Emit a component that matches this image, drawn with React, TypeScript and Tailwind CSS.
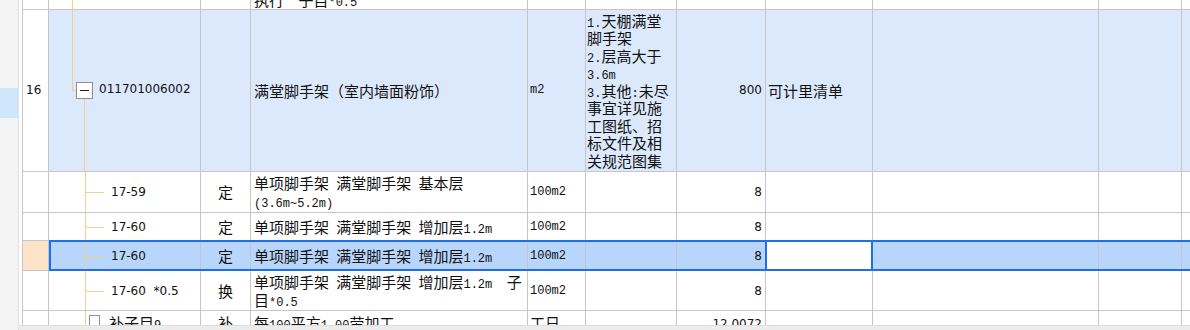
import React from "react";

const GRID =
  "grid grid-cols-[26px_152px_50px_277px_58px_91px_89px_107px_226px_83px_1fr] border-b border-[#c6c6c6]";
const C = "border-r border-[#c6c6c6] relative overflow-hidden";
const CJK =
  "font-['Noto_Sans_CJK_SC',sans-serif] text-[15px] leading-[17.5px] text-[#111] whitespace-pre";
const NUM = "font-['DejaVu_Sans',sans-serif] text-[12px] text-[#111] whitespace-pre";
const LINE = "absolute bg-[#f1cf90]";

function T({ s }: { s: string }) {
  const parts = s.split(/([\x00-\x7f]+)/).filter(Boolean);
  return (
    <>
      {parts.map((p, i) =>
        /^[\x00-\x7f]+$/.test(p) ? (
          <span key={i} className="font-['Liberation_Mono',monospace] text-[12px] leading-[0]">
            {p}
          </span>
        ) : (
          <span key={i}>{p}</span>
        )
      )}
    </>
  );
}

function ChildTree({ code }: { code: string }) {
  return (
    <>
      <div className={`${LINE} left-[36px] top-0 bottom-0 w-px`} />
      <div className={`${LINE} left-[36px] top-1/2 w-[19px] h-px`} />
      <div className={`${NUM} h-full flex items-center pl-[62px]`}>{code}</div>
    </>
  );
}

type ChildProps = {
  h: string;
  code: string;
  type: string;
  name: React.ReactNode;
  unit: string;
  qty: string;
  selected?: boolean;
};

function ChildRow({ h, code, type, name, unit, qty, selected }: ChildProps) {
  const bg = selected ? "bg-[#b8d6fb]" : "bg-white";
  return (
    <div className={`${GRID} ${h} relative`}>
      <div className={`${C} ${selected ? "bg-[#fde4c8]" : "bg-white"}`} />
      <div className={`${C} ${bg}`}>
        <ChildTree code={code} />
      </div>
      <div className={`${C} ${bg} ${CJK} flex items-center justify-center`}>{type}</div>
      <div className={`${C} ${bg} ${CJK} flex items-center pl-[3px]`}>
        <div>{name}</div>
      </div>
      <div className={`${C} ${bg} ${CJK} flex items-center pl-[2px]`}>
        <T s={unit} />
      </div>
      <div className={`${C} ${bg}`} />
      <div className={`${C} ${bg} ${NUM} flex items-center justify-end pr-[3px]`}>{qty}</div>
      <div className={`${C} ${selected ? "bg-white" : bg} overflow-visible`}>
        {selected && (
          <div className="absolute left-[-1px] right-[-1px] top-[-1px] bottom-[-1px] border-2 border-[#1e6ef0] pointer-events-none z-10" />
        )}
      </div>
      <div className={`${C} ${bg}`} />
      <div className={`${C} ${bg}`} />
      <div className={`${bg}`} />
      {selected && (
        <div className="absolute left-[26px] right-[-6px] top-[-1px] h-[31px] border-2 border-[#1e6ef0] pointer-events-none z-10" />
      )}
    </div>
  );
}

export default function App() {
  const blue = "bg-[#dce9fc]";
  return (
    <div className="w-[1190px] h-[330px] overflow-hidden bg-white flex">
      {/* left strip */}
      <div className="w-[19px] h-full bg-[#f3f3f3] border-r border-[#e2e2e2] flex flex-col shrink-0">
        <div className="h-[88px]" />
        <div className="h-[30px] bg-[#cfe5fa]" />
      </div>

      <div className="flex-1 flex flex-col min-w-0">
        <div className="h-[325px] pl-[3px] overflow-hidden">
          <div className="border-l border-[#c6c6c6] h-full flex flex-col">
            {/* top partial row */}
            <div className={`${GRID} h-[10px]`}>
              <div className={`${C}`} />
              <div className={`${C}`}>
                <div className={`${LINE} left-[23px] top-0 bottom-0 w-px`} />
              </div>
              <div className={`${C}`} />
              <div className={`${C} ${CJK} flex items-end pl-[3px]`}>
                <div className="mb-[1px]">
                  <T s="执行  子目*0.5" />
                </div>
              </div>
              <div className={`${C}`} />
              <div className={`${C}`} />
              <div className={`${C}`} />
              <div className={`${C}`} />
              <div className={`${C}`} />
              <div className={`${C}`} />
              <div />
            </div>

            {/* row 16 */}
            <div className={`${GRID} h-[163px]`}>
              <div className={`${C} bg-white ${NUM} flex items-center pl-[3px]`}>16</div>
              <div className={`${C} ${blue}`}>
                <div className={`${LINE} left-[23px] top-0 h-[80px] w-px`} />
                <div className={`${LINE} left-[23px] top-[80px] w-[4px] h-px`} />
                <div className="absolute left-[27px] top-[72px] w-[17px] h-[17px] border border-[#8e8e8e] bg-white flex items-center justify-center">
                  <div className="w-[9px] h-[1.5px] bg-[#222]" />
                </div>
                <div className={`${LINE} left-[35px] top-[89px] bottom-0 w-px`} />
                <div className={`${NUM} h-full flex items-center pl-[50px] pb-[2px]`}>011701006002</div>
              </div>
              <div className={`${C} ${blue}`} />
              <div className={`${C} ${blue} ${CJK} flex items-center pl-[3px]`}>
                满堂脚手架（室内墙面粉饰）
              </div>
              <div className={`${C} ${blue} ${CJK} flex items-center pl-[2px]`}>
                <T s="m2" />
              </div>
              <div className={`${C} ${blue} ${CJK} flex items-center pl-[1px]`}>
                <div>
                  <T s="1.天棚满堂" />
                  <br />
                  脚手架
                  <br />
                  <T s="2.层高大于" />
                  <br />
                  <T s="3.6m" />
                  <br />
                  <T s="3.其他:未尽" />
                  <br />
                  事宜详见施
                  <br />
                  工图纸、招
                  <br />
                  标文件及相
                  <br />
                  关规范图集
                </div>
              </div>
              <div className={`${C} ${blue} ${NUM} flex items-center justify-end pr-[3px]`}>800</div>
              <div className={`${C} ${blue} ${CJK} flex items-center pl-[2px]`}>可计里清单</div>
              <div className={`${C} ${blue}`} />
              <div className={`${C} ${blue}`} />
              <div className={`${blue}`} />
            </div>

            <ChildRow
              h="h-[41px]"
              code="17-59"
              type="定"
              name={
                <>
                  <T s="单项脚手架 满堂脚手架 基本层" />
                  <br />
                  <T s="(3.6m~5.2m)" />
                </>
              }
              unit="100m2"
              qty="8"
            />
            <ChildRow
              h="h-[29px]"
              code="17-60"
              type="定"
              name={<T s="单项脚手架 满堂脚手架 增加层1.2m" />}
              unit="100m2"
              qty="8"
            />
            <ChildRow
              h="h-[30px]"
              code="17-60"
              type="定"
              name={<T s="单项脚手架 满堂脚手架 增加层1.2m" />}
              unit="100m2"
              qty="8"
              selected
            />
            <ChildRow
              h="h-[40px]"
              code="17-60  *0.5"
              type="换"
              name={
                <>
                  <T s="单项脚手架 满堂脚手架 增加层1.2m  子" />
                  <br />
                  <T s="目*0.5" />
                </>
              }
              unit="100m2"
              qty="8"
            />

            {/* bottom partial row */}
            <div className={`${GRID} h-[14px] border-b-0`}>
              <div className={`${C}`} />
              <div className={`${C}`}>
                <div className={`${LINE} left-[36px] top-0 bottom-0 w-px`} />
                <div className="absolute left-[40px] top-[4px] w-[11px] h-[11px] border border-[#8e8e8e] bg-white" />
                <div className={`${CJK} pl-[60px] pt-[3px]`}>
                  <T s="补子目9" />
                </div>
              </div>
              <div className={`${C} ${CJK} flex justify-center pt-[3px]`}>补</div>
              <div className={`${C} ${CJK} pl-[3px] pt-[3px]`}>
                <T s="每100平方1.00劳加工" />
              </div>
              <div className={`${C} ${CJK} pl-[2px] pt-[3px]`}>工日</div>
              <div className={`${C}`} />
              <div className={`${C} ${NUM} flex justify-end pr-[3px] pt-[4px]`}>12.0072</div>
              <div className={`${C}`} />
              <div className={`${C}`} />
              <div className={`${C}`} />
              <div />
            </div>
          </div>
        </div>
        <div className="h-[5px] bg-[#ececec] border-t border-[#dedede]" />
      </div>
    </div>
  );
}
